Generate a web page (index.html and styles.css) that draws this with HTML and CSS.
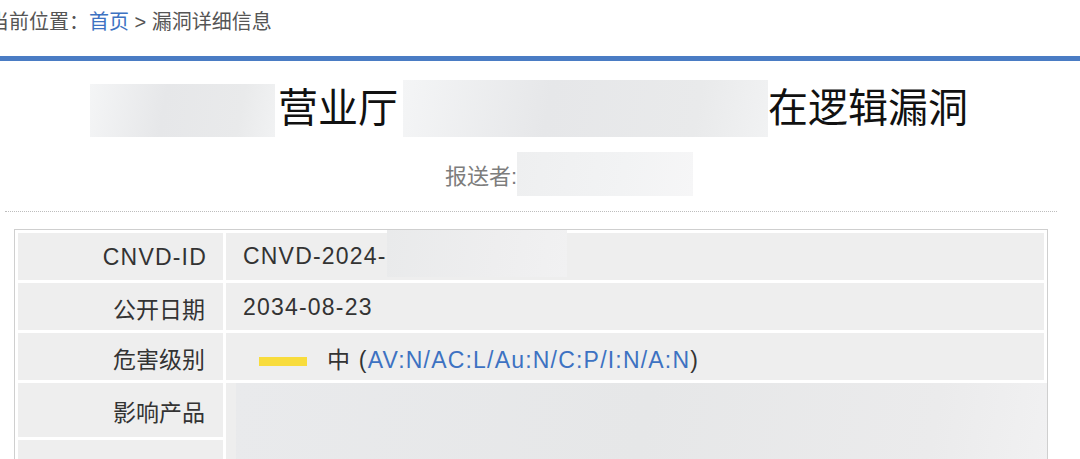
FILE: index.html
```html
<!DOCTYPE html>
<html lang="zh-CN">
<head>
    <meta charset="UTF-8">
    <meta name="viewport" content="width=device-width, initial-scale=1.0">
    <title>漏洞详细信息</title>
    <link rel="stylesheet" href="styles.css">
</head>
<body>
    <div class="crumb">
        当前位置：<a href="#">首页</a> &gt; 漏洞详细信息
    </div>
    <div class="topline"></div>

    <h1 class="title">
        <span class="blur blur-a"></span>
        <span class="title-text">营业厅</span>
        <span class="blur blur-b"></span>
        <span class="title-text">在逻辑漏洞</span>
    </h1>

    <div class="reporter">
        <span>报送者:</span><span class="blur blur-c"></span>
    </div>

    <div class="dots"></div>

    <table class="detail">
        <tr>
            <td class="label latin">CNVD-ID</td>
            <td class="value latin">CNVD-2024-<span class="blur blur-d"></span></td>
        </tr>
        <tr>
            <td class="label">公开日期</td>
            <td class="value latin">2034-08-23</td>
        </tr>
        <tr>
            <td class="label">危害级别</td>
            <td class="value latin"><span class="level"></span>中 (<a href="#">AV:N/AC:L/Au:N/C:P/I:N/A:N</a>)</td>
        </tr>
        <tr>
            <td class="label">影响产品</td>
            <td class="value covered" rowspan="2"><div class="blur blur-e"></div></td>
        </tr>
        <tr>
            <td class="label"></td>
        </tr>
    </table>
</body>
</html>
```

FILE: styles.css
```css
body {
    margin: 0;
    font-family: "Liberation Sans", "Noto Sans CJK SC", sans-serif;
    background: #fff;
    color: #333;
    overflow: hidden;
}
a {
    color: #3d72c2;
    text-decoration: none;
}
.crumb {
    margin-left: -11px;
    font-size: 20px;
    line-height: 44px;
    color: #555;
}
.topline {
    height: 5px;
    margin-top: 12px;
    background: #4a7cc4;
}
.title {
    display: flex;
    justify-content: center;
    align-items: center;
    margin: 19px 0 0;
    padding-right: 22px;
    height: 57px;
    font-size: 40px;
    font-weight: normal;
    color: #111;
}
.title-text {
    line-height: 57px;
}
.blur {
    display: inline-block;
    background: linear-gradient(100deg, #f4f5f6, #e6e7e9 40%, #e9eaeb 80%, #f1f2f3);
}
.blur-a {
    width: 185px;
    height: 53px;
    margin-top: 3px;
    margin-right: 3px;
}
.blur-b {
    width: 365px;
    height: 57px;
    margin-left: 5px;
}
.reporter {
    display: flex;
    justify-content: center;
    align-items: center;
    margin-top: 15px;
    padding-left: 58px;
    height: 44px;
    font-size: 22px;
    color: #7d7d7d;
}
.blur-c {
    width: 176px;
    height: 44px;
    background: linear-gradient(100deg, #eeeff0, #f2f3f4 60%, #f6f6f7);
}
.dots {
    margin: 15px 23px 0 5px;
    border-top: 1px dotted #bdbdbd;
}
.detail {
    margin: 17px 0 0 14px;
    border: 1px solid #cfcfcf;
    border-spacing: 3px;
    font-size: 23px;
}
.detail td {
    height: 45px;
    padding: 2px 0 0;
    background: #eeeeee;
    color: #333;
}
.latin {
    letter-spacing: 1.2px;
}
.label {
    width: 187px;
    padding-right: 18px !important;
    text-align: right;
}
.label.latin {
    padding-right: 16px !important;
}
.value {
    width: 801px;
    padding-left: 17px !important;
}
.blur-d {
    width: 180px;
    height: 47px;
    vertical-align: middle;
    margin-top: -8px;
    background: linear-gradient(100deg, #e9eaeb, #eeeeef 60%, #f1f1f2);
}
.level {
    display: inline-block;
    width: 48px;
    height: 9px;
    margin: 0 20px 0 16px;
    vertical-align: middle;
    background: #f8dc3c;
}
.covered {
    padding: 0 0 0 10px !important;
    vertical-align: top;
}
.blur-e {
    display: block;
    height: 110px;
    margin-right: -3px;
    background: linear-gradient(100deg, #e9eaec, #e6e7e8 50%, #ebebec 85%, #f1f1f2);
}
```
